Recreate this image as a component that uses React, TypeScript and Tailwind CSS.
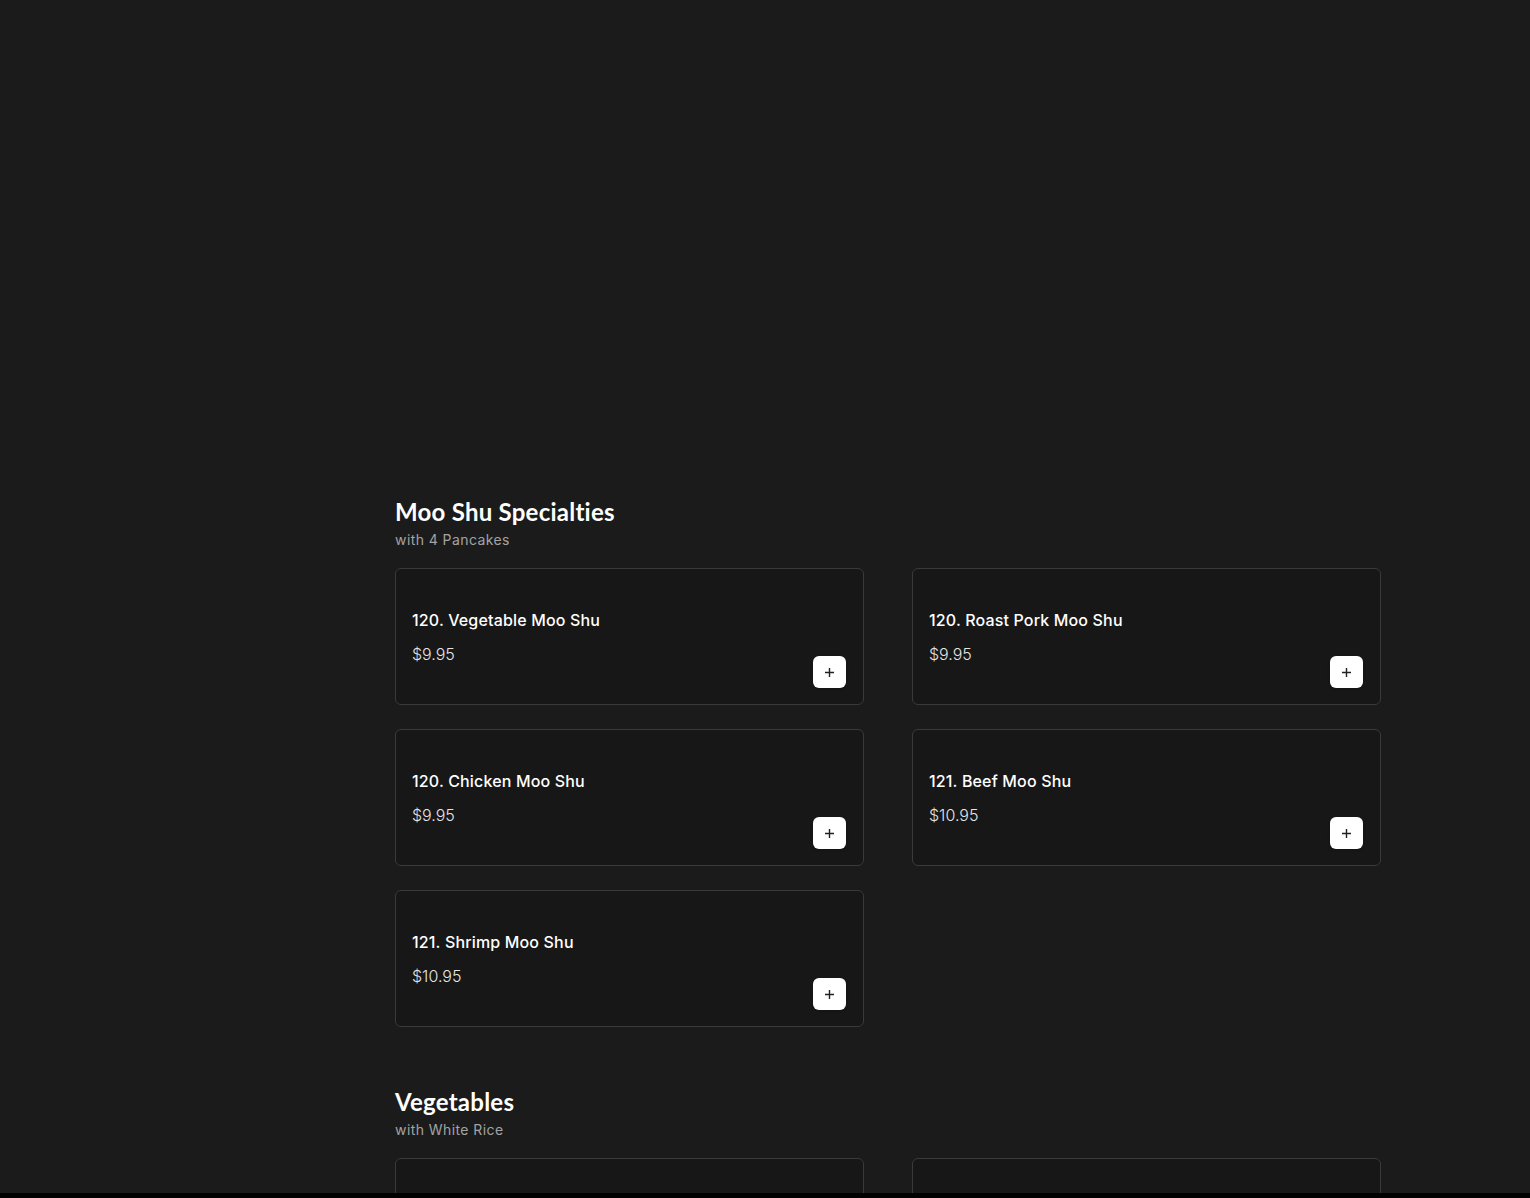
import React from "react";

type Item = { name: string; price: string };

const sections: { title: string; subtitle: string; items: Item[] }[] = [
  {
    title: "Moo Shu Specialties",
    subtitle: "with 4 Pancakes",
    items: [
      { name: "120. Vegetable Moo Shu", price: "$9.95" },
      { name: "120. Roast Pork Moo Shu", price: "$9.95" },
      { name: "120. Chicken Moo Shu", price: "$9.95" },
      { name: "121. Beef Moo Shu", price: "$10.95" },
      { name: "121. Shrimp Moo Shu", price: "$10.95" },
    ],
  },
  {
    title: "Vegetables",
    subtitle: "with White Rice",
    items: [
      { name: "130. Mixed Vegetables", price: "$9.95" },
      { name: "131. Broccoli with Garlic Sauce", price: "$9.95" },
    ],
  },
];

function Card({ item }: { item: Item }) {
  return (
    <div className="h-[137px] rounded-md border border-[#3a3a3a] bg-[#171717] pl-4 pr-[16px] pt-[39px] pb-4 flex justify-between">
      <div className="self-start">
        <div className="text-[16px] leading-6 font-medium tracking-[0.01em] text-white" style={{ fontFamily: "Inter, 'Noto Sans', sans-serif" }}>
          {item.name}
        </div>
        <div className="mt-[10px] text-[16px] leading-6 font-light text-[#e5e5e5]" style={{ fontFamily: "Inter, 'Noto Sans', sans-serif" }}>
          {item.price}
        </div>
      </div>
      <button className="self-end w-[33px] h-[32px] mr-px rounded-md bg-white flex items-center justify-center shadow-sm">
        <svg width="11" height="11" viewBox="0 0 11 11" fill="none">
          <path d="M5.5 1v9M1 5.5h9" stroke="#222" strokeWidth="1.4" />
        </svg>
      </button>
    </div>
  );
}

export default function App() {
  return (
    <div className="h-screen w-full flex flex-col bg-[#1b1b1b] overflow-hidden">
      <div className="flex-1 overflow-hidden pt-[496px] pl-[395px] pr-[149px]">
        {sections.map((s, i) => (
          <section key={s.title} className={i > 0 ? "mt-[59px]" : ""}>
            <h2 className="text-[24px] leading-8 font-bold text-white tracking-[0.01em]" style={{ fontFamily: "Lato, 'Noto Sans', sans-serif" }}>
              {s.title}
            </h2>
            <p className="mt-[2px] text-[14px] leading-5 tracking-[0.03em] text-[#a3a3a3]" style={{ fontFamily: "Inter, 'Noto Sans', sans-serif" }}>
              {s.subtitle}
            </p>
            <div className="mt-[18px] grid grid-cols-2 gap-x-12 gap-y-6">
              {s.items.map((it) => (
                <Card key={it.name} item={it} />
              ))}
            </div>
          </section>
        ))}
      </div>
      <div className="h-[5px] shrink-0 bg-black" />
    </div>
  );
}
